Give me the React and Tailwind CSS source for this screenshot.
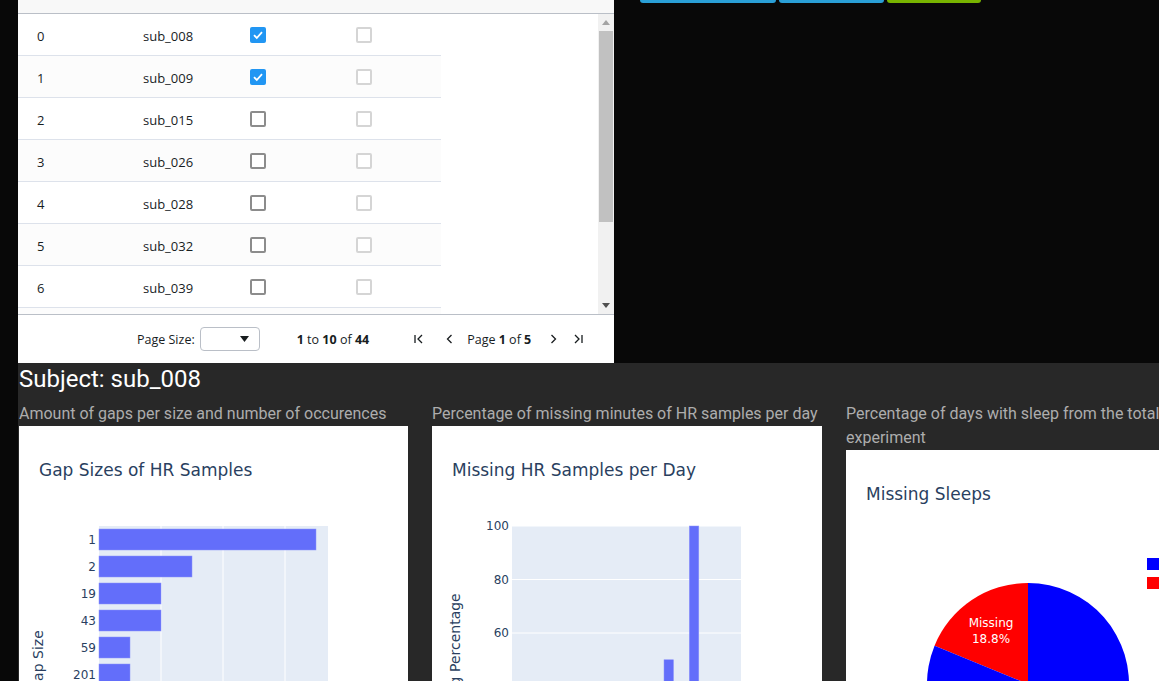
import React from "react";

const rows = [
  { id: 0, name: "sub_008", a: true },
  { id: 1, name: "sub_009", a: true },
  { id: 2, name: "sub_015", a: false },
  { id: 3, name: "sub_026", a: false },
  { id: 4, name: "sub_028", a: false },
  { id: 5, name: "sub_032", a: false },
  { id: 6, name: "sub_039", a: false },
  { id: 7, name: "sub_041", a: false },
];

function Check({ checked, light }) {
  if (checked) {
    return (
      <div className="w-4 h-4 rounded-[2px] bg-[#2196f3] flex items-center justify-center">
        <svg width="12" height="12" viewBox="0 0 12 12">
          <path d="M2 6.2 L4.8 9 L10 3.2" fill="none" stroke="#fff" strokeWidth="1.8" />
        </svg>
      </div>
    );
  }
  return (
    <div
      className={`w-4 h-4 rounded-[2px] border-2 bg-white ${
        light ? "border-[#d5d5d5]" : "border-[#8c8c8c]"
      }`}
    />
  );
}

function PagerIcon({ type }) {
  const d = {
    first: "M2 2 V10 M9 2 L5 6 L9 10",
    prev: "M7.5 2 L3.5 6 L7.5 10",
    next: "M4.5 2 L8.5 6 L4.5 10",
    last: "M3 2 L7 6 L3 10 M10 2 V10",
  }[type];
  return (
    <svg width="12" height="12" viewBox="0 0 12 12">
      <path d={d} fill="none" stroke="#181d1f" strokeWidth="1.3" />
    </svg>
  );
}

function DataTable() {
  return (
    <div className="w-[596px] h-[363px] bg-white flex flex-col font-['Open_Sans',sans-serif] text-[13px] text-[#181d1f]">
      <div className="h-[14px] bg-[#f8f8f8] border-b border-[#babfc7]" />
      <div className="h-[300px] flex overflow-hidden">
        <div className="w-[423px] flex flex-col">
          {rows.map((r, i) => (
            <div
              key={r.id}
              className={`h-[42px] shrink-0 flex items-center border-b border-[#dde2eb] ${
                i % 2 === 1 ? "bg-[#fcfcfc]" : "bg-white"
              }`}
            >
              <div className="w-[106px] pl-[19px] pt-[4px]">{r.id}</div>
              <div className="w-[107px] pl-[19px] pt-[4px]">{r.name}</div>
              <div className="w-[106px] pl-[19px] pt-[1px]">
                <Check checked={r.a} />
              </div>
              <div className="w-[104px] pl-[19px] pt-[1px]">
                <Check light />
              </div>
            </div>
          ))}
        </div>
        <div className="flex-1" />
        <div className="w-[16px] bg-[#f1f1f1] flex flex-col items-center">
          <div className="h-[17px] flex items-center justify-center">
            <svg width="8" height="5" viewBox="0 0 8 5">
              <path d="M0 5 L4 0 L8 5 Z" fill="#a3a3a3" />
            </svg>
          </div>
          <div className="w-[14px] h-[191px] bg-[#c1c1c1]" />
          <div className="flex-1" />
          <div className="h-[17px] flex items-center justify-center">
            <svg width="8" height="5" viewBox="0 0 8 5">
              <path d="M0 0 L4 5 L8 0 Z" fill="#505050" />
            </svg>
          </div>
        </div>
      </div>
      <div className="h-[49px] border-t border-[#babfc7] flex items-center pl-[119px] pt-[3px] text-[12.5px]">
        <span>Page Size:</span>
        <div className="ml-[5px] -mt-[3px] w-[60px] h-[24px] border border-[#babfc7] rounded-[4px] flex items-center justify-end pr-[10px]">
          <svg width="9" height="6" viewBox="0 0 9 6">
            <path d="M0 0 L9 0 L4.5 6 Z" fill="#181d1f" />
          </svg>
        </div>
        <span className="ml-[37px]">
          <b>1</b> to <b>10</b> of <b>44</b>
        </span>
        <div className="ml-[44px] flex items-center">
          <span className="-mt-[3px]">
            <PagerIcon type="first" />
          </span>
          <span className="ml-[19px] -mt-[3px]">
            <PagerIcon type="prev" />
          </span>
          <span className="ml-[11px]">
            Page <b>1</b> of <b>5</b>
          </span>
          <span className="ml-[16px] -mt-[3px]">
            <PagerIcon type="next" />
          </span>
          <span className="ml-[13px] -mt-[3px]">
            <PagerIcon type="last" />
          </span>
        </div>
      </div>
    </div>
  );
}

const FONT = "DejaVu Sans, Verdana, sans-serif";
const AXIS = "#2a3f5f";

function GapChart() {
  const cats = ["1", "2", "19", "43", "59", "201", "247", "310", "432", "860"];
  const widths = [217, 93, 62, 62, 31, 31, 31, 31, 31, 31];
  return (
    <svg width="389" height="450">
      <text x="20" y="50" fontFamily={FONT} fontSize="17" fill={AXIS}>
        Gap Sizes of HR Samples
      </text>
      <rect x="80" y="100" width="229" height="270" fill="#e5ecf6" />
      {[142, 204, 266].map((x) => (
        <line key={x} x1={x} y1="100" x2={x} y2="370" stroke="#fff" strokeWidth="1" />
      ))}
      {cats.map((c, i) => (
        <g key={c}>
          <rect x="80" y={103 + 27 * i} width={widths[i]} height="21" fill="#636efa" stroke="#8d94fb" strokeWidth="0.5" />
          <text x="77" y={118 + 27 * i} textAnchor="end" fontFamily={FONT} fontSize="12" fill={AXIS}>
            {c}
          </text>
        </g>
      ))}
      <text
        x="0"
        y="0"
        transform="translate(24 235) rotate(-90)"
        textAnchor="middle"
        fontFamily={FONT}
        fontSize="14"
        fill={AXIS}
      >
        Gap Size
      </text>
    </svg>
  );
}

function MissingChart() {
  const y0 = 367.5;
  const unit = 53.5 / 20;
  const bars = [
    { x: 232, v: 50 },
    { x: 257.3, v: 100 },
    { x: 206, v: 4 },
    { x: 283, v: 3 },
  ];
  return (
    <svg width="390" height="450">
      <text x="20" y="50" fontFamily={FONT} fontSize="17" fill={AXIS}>
        Missing HR Samples per Day
      </text>
      <rect x="80" y="100" width="229" height="267.5" fill="#e5ecf6" />
      {[100, 80, 60, 40, 20].map((v) => {
        const y = y0 - v * unit;
        return (
          <g key={v}>
            <line x1="80" y1={y} x2="309" y2={y} stroke="#fff" strokeWidth="1" />
            <text x="77" y={y + 4} textAnchor="end" fontFamily={FONT} fontSize="12" fill={AXIS}>
              {v}
            </text>
          </g>
        );
      })}
      {bars.map((b) => (
        <rect
          key={b.x}
          x={b.x}
          y={y0 - b.v * unit}
          width="9.5"
          height={b.v * unit}
          fill="#636efa"
          stroke="#8d94fb"
          strokeWidth="0.5"
        />
      ))}
      <text
        x="0"
        y="0"
        transform="translate(28 235) rotate(-90)"
        textAnchor="middle"
        fontFamily={FONT}
        fontSize="14"
        fill={AXIS}
      >
        Missing Percentage
      </text>
    </svg>
  );
}

function SleepChart() {
  const cx = 182;
  const cy = 234;
  const r = 101;
  const ang = (18.8 / 100) * Math.PI * 2;
  const ex = cx - r * Math.sin(ang);
  const ey = cy - r * Math.cos(ang);
  return (
    <svg width="390" height="450">
      <text x="20" y="50" fontFamily={FONT} fontSize="17" fill={AXIS}>
        Missing Sleeps
      </text>
      <path d={`M${cx} ${cy} L${cx} ${cy - r} A${r} ${r} 0 0 0 ${ex} ${ey} Z`} fill="#ff0000" />
      <path d={`M${cx} ${cy} L${ex} ${ey} A${r} ${r} 0 1 0 ${cx} ${cy - r} Z`} fill="#0000ff" />
      <text x="145" y="177" textAnchor="middle" fontFamily={FONT} fontSize="12" fill="#fff">
        Missing
      </text>
      <text x="145" y="193" textAnchor="middle" fontFamily={FONT} fontSize="12" fill="#fff">
        18.8%
      </text>
      <rect x="301" y="108" width="14" height="12" fill="#0000ff" />
      <rect x="301" y="127" width="14" height="12" fill="#ff0000" />
      <text x="322" y="118" fontFamily={FONT} fontSize="12" fill={AXIS}>
        Present
      </text>
      <text x="322" y="137" fontFamily={FONT} fontSize="12" fill={AXIS}>
        Missing
      </text>
    </svg>
  );
}

export default function App() {
  return (
    <div className="w-[1159px] h-[681px] overflow-hidden bg-[#080808] font-['Roboto',sans-serif]">
      <div className="flex pl-[18px]">
        <DataTable />
        <div className="flex items-start gap-[3px] ml-[26px]">
          <div className="w-[136px] h-[3px] bg-[#2a9fd6] rounded-b-[3px]" />
          <div className="w-[105px] h-[3px] bg-[#2a9fd6] rounded-b-[3px]" />
          <div className="w-[94px] h-[3px] bg-[#77b300] rounded-b-[3px]" />
        </div>
      </div>
      <div className="ml-[18px] bg-[#282828] pl-[1px] h-[400px]">
        <div className="h-[39px] text-[24px] leading-[32px] text-white">Subject: sub_008</div>
        <div className="flex text-[16px] leading-[24px] text-[#adadad]">
          <div className="w-[413px] shrink-0">
            <div>Amount of gaps per size and number of occurences</div>
            <div className="w-[389px] bg-white">
              <GapChart />
            </div>
          </div>
          <div className="w-[414px] shrink-0">
            <div>Percentage of missing minutes of HR samples per day</div>
            <div className="w-[390px] bg-white">
              <MissingChart />
            </div>
          </div>
          <div className="w-[326px] shrink-0">
            <div>Percentage of days with sleep from the total experiment</div>
            <div className="w-[390px] bg-white">
              <SleepChart />
            </div>
          </div>
        </div>
      </div>
    </div>
  );
}
